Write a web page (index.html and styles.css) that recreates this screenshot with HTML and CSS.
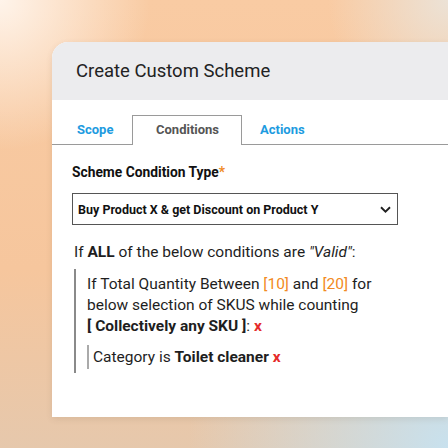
FILE: index.html
```html
<!DOCTYPE html>
<html>
<head>
<meta charset="utf-8">
<link rel="stylesheet" href="styles.css">
</head>
<body>
<div class="stage">
  <div class="card">
    <div class="card-header">Create Custom Scheme</div>
    <div class="tabs">
      <div class="tab tab-scope">Scope</div>
      <div class="tab active">Conditions</div>
      <div class="tab tab-actions">Actions</div>
    </div>
    <div class="content">
      <div class="field-label">Scheme Condition Type<span class="req">*</span></div>
      <div class="select">
        <span>Buy Product X &amp; get Discount on Product Y</span>
        <svg class="chev" width="11" height="7" viewBox="0 0 11 7"><path d="M1 1.2 L5.5 5.6 L10 1.2" fill="none" stroke="#222" stroke-width="1.9"/></svg>
      </div>
      <p class="intro">If <b>ALL</b> of the below conditions are <i>"Valid"</i>:</p>
      <div class="cond">
        <div class="cond-line">If Total Quantity Between <span class="num">[10]</span> and <span class="num">[20]</span> for</div>
        <div class="cond-line">below selection of SKUS while counting</div>
        <div class="cond-line"><b>[ Collectively any SKU ]</b>: <span class="x">x</span></div>
        <div class="sub">Category is <b>Toilet cleaner</b> <span class="x">x</span></div>
      </div>
    </div>
  </div>
</div>
</body>
</html>
```
FILE: styles.css
```css
html, body {
  margin: 0;
  padding: 0;
}
body {
  width: 448px;
  height: 448px;
  overflow: hidden;
  font-family: Roboto, "Liberation Sans", sans-serif;
  color: #1e1e1e;
  background:
    radial-gradient(circle at 0% 0%, rgba(255, 246, 238, 0.95) 0, rgba(255, 246, 238, 0) 150px),
    radial-gradient(ellipse at 100% 100%, rgba(200, 225, 238, 1) 0, rgba(200, 225, 238, 0) 260px),
    radial-gradient(ellipse at 100% 0%, rgba(236, 226, 214, 1) 0, rgba(236, 226, 214, 0) 120px),
    linear-gradient(180deg, #f9cba3 0%, #f6c69d 60%, #e6c8ac 100%);
}
.stage {
  padding: 42px 0 0 52px;
}
.card {
  width: 396px;
  height: 375px;
  background: #fff;
  border-top-left-radius: 16px;
  overflow: hidden;
  box-shadow: 0 2px 6px rgba(90, 70, 50, 0.12);
}
.card-header {
  height: 58px;
  background: #ececee;
  display: flex;
  align-items: center;
  padding-left: 24px;
  font-size: 18.5px;
  color: #222;
}
.tabs {
  margin-top: 15px;
  display: flex;
  border-bottom: 1px solid #9a9a9a;
  height: 29px;
}
.tab {
  font-size: 13px;
  font-weight: 700;
  line-height: 28px;
  color: #1d9be0;
  border: 1px solid transparent;
  border-bottom: none;
  box-sizing: border-box;
}
.tab-scope {
  width: 80px;
  padding-left: 24px;
}
.tab.active {
  width: 110px;
  padding-left: 23px;
  color: #555;
  border-color: #9a9a9a;
  background: #fff;
  height: 30px;
  margin-bottom: -1px;
}
.tab-actions {
  padding-left: 17px;
}
.content {
  padding-left: 20px;
}
.field-label {
  margin-top: 19px;
  font-size: 13.8px;
  font-weight: 700;
  line-height: 17px;
  color: #111;
}
.req {
  color: #f08a24;
}
.select {
  margin-top: 12px;
  width: 326px;
  height: 32px;
  box-sizing: border-box;
  border: 1px solid #555;
  display: flex;
  align-items: center;
  justify-content: space-between;
  padding: 0 6px 0 5px;
  font-size: 12.5px;
  font-weight: 700;
  color: #111;
}
.chev {
  display: block;
}
.intro {
  margin: 17px 0 0 2px;
  font-size: 15.5px;
  line-height: 20px;
}
.cond {
  margin: 7px 0 0 2px;
  border-left: 2px solid #8a8a8a;
  padding: 5px 0 4px 11px;
  width: 310px;
}
.cond-line {
  font-size: 15.5px;
  line-height: 21px;
  white-space: nowrap;
}
.num {
  color: #f28a22;
}
.x {
  color: #e52b2b;
  font-weight: 700;
}
.sub {
  margin-top: 8px;
  border-left: 2px solid #aaa;
  padding-left: 4px;
  font-size: 15.5px;
  line-height: 24px;
}
```
